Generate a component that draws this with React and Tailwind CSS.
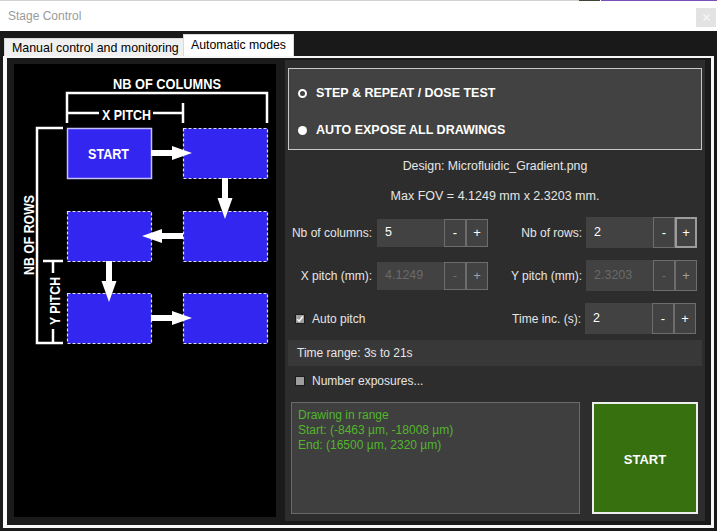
function Spin({ value, tall, disabled, focusPlus, className = "" }) {
  const hc = tall ? "h-[31px]" : "h-[28px]";
  return (
    <div className={`flex ${hc} ${className}`}>
      <div
        className={`w-[67px] bg-[#424242] flex items-center pl-[8px] text-[12.5px] ${
          disabled ? "text-[#6a6a6a]" : "text-white"
        }`}
      >
        {value}
      </div>
      <div
        className={`w-[22px] bg-[#424242] border border-[#6d6d6d] flex items-center justify-center text-[13px] ${
          disabled ? "text-[#6e6e6e]" : "text-white"
        }`}
      >
        -
      </div>
      <div
        className={`w-[22px] bg-[#424242] ${
          focusPlus ? "border-2 border-[#9c9c9c]" : "border border-[#6d6d6d]"
        } flex items-center justify-center text-[13px] ${disabled ? "text-[#a0a0a0]" : "text-white"}`}
      >
        +
      </div>
    </div>
  );
}

function Diagram() {
  const dashed = { fill: "#3326f0", stroke: "#dcdcff", strokeWidth: 1.2, strokeDasharray: "3 2" };
  const line = { stroke: "white", strokeWidth: 2.5, fill: "none" };
  return (
    <svg width="262" height="453" viewBox="14 64 262 453">
      <rect x="14" y="64" width="262" height="453" fill="black" />
      <path d="M67 123 V93 H267 V123" {...line} />
      <path d="M67 113 H99 M153 113 H183 M183 103 V123" {...line} />
      <path d="M63 128 H37 V343 H63" {...line} />
      <path d="M43 261 H63 M53 261 V273 M53 329 V343" {...line} />
      <rect x="67.5" y="128.5" width="84" height="50" fill="#3326f0" stroke="#c4c0ff" strokeWidth="1.5" />
      <rect x="183.5" y="128.5" width="84" height="50" {...dashed} />
      <rect x="67.5" y="211.5" width="84" height="50" {...dashed} />
      <rect x="183.5" y="211.5" width="84" height="50" {...dashed} />
      <rect x="67.5" y="293.5" width="84" height="50" {...dashed} />
      <rect x="183.5" y="293.5" width="84" height="50" {...dashed} />
      <polygon points="151,150 172,150 172,146 192,153 172,160 172,156 151,156" fill="white" />
      <polygon points="222,178 228,178 228,198 232.5,198 225,219 217.5,198 222,198" fill="white" />
      <polygon points="183,233 162,233 162,229 142,236 162,243 162,239 183,239" fill="white" />
      <polygon points="106,261 112,261 112,281 116.5,281 109,302 101.5,281 106,281" fill="white" />
      <polygon points="151,315 172,315 172,311 192,318 172,325 172,321 151,321" fill="white" />
      <g fontFamily="'Liberation Sans', Arial, sans-serif" fontWeight="bold" fill="white">
        <text x="167" y="89" textAnchor="middle" fontSize="15.5" textLength="108" lengthAdjust="spacingAndGlyphs">
          NB OF COLUMNS
        </text>
        <text x="126.5" y="119.5" textAnchor="middle" fontSize="15.5" textLength="49" lengthAdjust="spacingAndGlyphs">
          X PITCH
        </text>
        <text x="108.5" y="159" textAnchor="middle" fontSize="15.5" textLength="41" lengthAdjust="spacingAndGlyphs">
          START
        </text>
        <text
          transform="translate(33.5,235) rotate(-90)"
          textAnchor="middle"
          fontSize="15.5"
          textLength="80"
          lengthAdjust="spacingAndGlyphs"
        >
          NB OF ROWS
        </text>
        <text
          transform="translate(59.5,301) rotate(-90)"
          textAnchor="middle"
          fontSize="15.5"
          textLength="48"
          lengthAdjust="spacingAndGlyphs"
        >
          Y PITCH
        </text>
      </g>
    </svg>
  );
}

export default function App() {
  return (
    <div className="w-[717px] h-[531px] bg-[#191919] flex flex-col overflow-hidden font-['Liberation_Sans',Arial,sans-serif]">
      {/* title bar */}
      <div className="h-[31px] bg-white flex flex-col shrink-0">
        <div className="h-px flex shrink-0">
          <div className="w-[579px] bg-[#d2d2d2]" />
          <div className="w-[21px] bg-[#3d4538]" />
          <div className="w-px bg-white" />
          <div className="flex-1 bg-[#7b4fb8]" />
        </div>
        <div className="flex-1 flex items-center justify-between">
          <span className="ml-[8px] text-[12px] leading-[14px] text-[#9a9a9a]">Stage Control</span>
          <div className="w-[20px] h-[19px] mr-px mt-[3px] bg-[#e3e3e3] flex items-center justify-center">
            <svg width="7" height="7" viewBox="0 0 7 7">
              <path d="M0.5 0.5 L6.5 6.5 M6.5 0.5 L0.5 6.5" stroke="#f6f6f6" strokeWidth="1.3" />
            </svg>
          </div>
        </div>
      </div>

      {/* tabs */}
      <div className="h-[25px] flex items-end pl-[4px] shrink-0">
        <div className="w-[179px] h-[18px] bg-[#f0f0f0] border-t border-l border-[#d9d9d9] flex items-center pl-[7px] text-[12.4px] leading-[14px] text-black whitespace-nowrap">
          Manual control and monitoring
        </div>
        <div className="w-[111px] h-[22px] bg-white border-t border-l border-r border-[#d9d9d9] flex items-center pl-[7px] pb-[1px] text-[12.3px] leading-[14px] text-black whitespace-nowrap">
          Automatic modes
        </div>
      </div>

      {/* tab page */}
      <div className="ml-[3px] w-[711px] h-[472px] shrink-0 border-l-4 border-t-2 border-r-[3px] border-b-[3px] border-[#f7f7f7] bg-[#1a1a1a] flex items-start pl-[7px] pt-[2px]">
        <div className="w-[262px] h-[453px] mt-[4px] bg-black">
          <Diagram />
        </div>

        <div className="ml-[9px] w-[420px] h-[461px] bg-[#2d2d2d] flex flex-col text-[#e6e6e6]">
          {/* group box */}
          <div className="mt-[8px] mx-[3px] h-[82px] border border-[#c8c8c8] bg-[#424242] flex flex-col pl-[9px]">
            <div className="mt-[17px] h-[14px] flex items-center">
              <div className="w-[9px] h-[9px] rounded-full border-2 border-white" />
              <span className="ml-[9px] text-[12.5px] leading-[14px] font-bold text-white">
                STEP &amp; REPEAT / DOSE TEST
              </span>
            </div>
            <div className="mt-[23px] h-[14px] flex items-center">
              <div className="w-[9px] h-[9px] rounded-full bg-white" />
              <span className="ml-[9px] text-[12.5px] leading-[14px] font-bold text-white">
                AUTO EXPOSE ALL DRAWINGS
              </span>
            </div>
          </div>

          <div className="mt-[8px] h-[16px] text-center text-[12.3px] leading-[16px]">
            Design: Microfluidic_Gradient.png
          </div>
          <div className="mt-[14px] h-[16px] text-center text-[12.5px] leading-[16px]">
            Max FOV = 4.1249 mm x 2.3203 mm.
          </div>

          {/* row 1 */}
          <div className="mt-[13px] h-[31px] flex items-center text-[12px]">
            <div className="w-[87px] text-right">Nb of columns:</div>
            <Spin value="5" className="ml-[5px]" />
            <div className="w-[94px] text-right">Nb of rows:</div>
            <Spin value="2" tall focusPlus className="ml-[4px]" />
          </div>
          {/* row 2 */}
          <div className="mt-[12px] h-[31px] flex items-center text-[12px]">
            <div className="w-[87px] text-right">X pitch (mm):</div>
            <Spin value="4.1249" disabled className="ml-[5px]" />
            <div className="w-[94px] text-right">Y pitch (mm):</div>
            <Spin value="2.3203" disabled tall className="ml-[4px]" />
          </div>
          {/* row 3 */}
          <div className="mt-[12px] h-[31px] flex items-center text-[12px]">
            <div className="w-[87px] flex items-center pl-[10px]">
              <div className="w-[10px] h-[10px] bg-[#9d9d9d] border border-[#1c1c1c] flex items-center justify-center">
                <svg width="8" height="8" viewBox="0 0 8 8">
                  <path d="M1.2 4.2 L3.2 6.2 L6.8 1.5" stroke="white" strokeWidth="1.5" fill="none" />
                </svg>
              </div>
              <span className="ml-[7px] whitespace-nowrap">Auto pitch</span>
            </div>
            <div className="w-[115px]" />
            <div className="w-[94px] text-right">Time inc. (s):</div>
            <Spin value="2" tall className="ml-[4px]" />
          </div>

          {/* time range */}
          <div className="mt-[6px] mx-[3px] h-[26px] bg-[#383838] pl-[9px] flex items-center text-[12px]">
            Time range: 3s to 21s
          </div>

          {/* number exposures */}
          <div className="mt-[7px] h-[16px] flex items-center pl-[10px] text-[12px]">
            <div className="w-[10px] h-[10px] bg-[#9d9d9d] border border-[#1c1c1c]" />
            <span className="ml-[7px]">Number exposures...</span>
          </div>

          {/* bottom */}
          <div className="mt-[13px] h-[112px] flex pl-[6px]">
            <div className="w-[289px] h-full bg-[#3f3f3f] border border-[#6a6a6a] pl-[6px] pt-[5px] text-[12px] leading-[15px] text-[#52b62b]">
              <div>Drawing in range</div>
              <div>Start: (-8463 µm, -18008 µm)</div>
              <div>End: (16500 µm, 2320 µm)</div>
            </div>
            <div className="ml-[12px] w-[106px] h-full border-2 border-[#eeeeee] bg-[#36700f] flex items-center justify-center pt-[3px] text-white font-bold text-[13px]">
              START
            </div>
          </div>
        </div>
      </div>
    </div>
  );
}
